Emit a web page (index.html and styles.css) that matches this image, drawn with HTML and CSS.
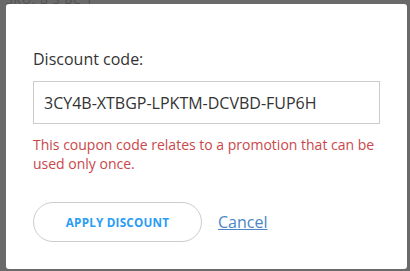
FILE: index.html
```html
<!DOCTYPE html>
<html>
<head>
<meta charset="utf-8">
<link rel="stylesheet" href="styles.css">
</head>
<body>
<div class="backdrop">
  <div class="behind">SKU: B S BC Y</div>
  <div class="modal">
    <label class="label" for="code">Discount code:</label>
    <input class="input" id="code" type="text" value="3CY4B-XTBGP-LPKTM-DCVBD-FUP6H">
    <p class="error">This coupon code relates to a promotion that can be used only once.</p>
    <div class="actions">
      <button class="apply">APPLY DISCOUNT</button>
      <a class="cancel" href="#">Cancel</a>
    </div>
  </div>
</div>
</body>
</html>
```
FILE: styles.css
```css
* { box-sizing: border-box; }
html, body { margin: 0; padding: 0; }
body {
  width: 410px;
  height: 271px;
  overflow: hidden;
  background: #6a6a6a;
  font-family: "Open Sans", "Liberation Sans", sans-serif;
}
.backdrop {
  position: relative;
  width: 410px;
  height: 271px;
  padding: 4px 3px 2px 6px;
}
.behind {
  position: absolute;
  left: 6px;
  top: -9px;
  font-size: 12px;
  color: #505050;
  letter-spacing: 1px;
}
.modal {
  position: relative;
  background: #fff;
  border-radius: 3px;
  height: 265px;
  padding: 45px 27px 0 27px;
}
.label {
  display: block;
  font-size: 16px;
  color: #333;
  line-height: 20px;
}
.input {
  display: block;
  margin-top: 12px;
  width: 347px;
  height: 43px;
  border: 1px solid #ccc;
  border-radius: 0;
  padding: 0 10px;
  font-family: inherit;
  font-size: 16px;
  color: #333;
  outline: none;
}
.error {
  margin: 11px 0 0 0;
  font-size: 14px;
  line-height: 19px;
  color: #c9474a;
  width: 350px;
}
.actions {
  display: flex;
  align-items: center;
  gap: 16px;
  margin-top: 29px;
}
.apply {
  width: 169px;
  height: 40px;
  border: 1px solid #ccc;
  border-radius: 20px;
  background: #fff;
  font-family: inherit;
  font-weight: 700;
  font-size: 11.7px;
  letter-spacing: 0.2px;
  color: #2a9df4;
  padding: 0;
}
.cancel {
  font-size: 16px;
  color: #4a86c5;
  text-decoration: underline;
}
```
